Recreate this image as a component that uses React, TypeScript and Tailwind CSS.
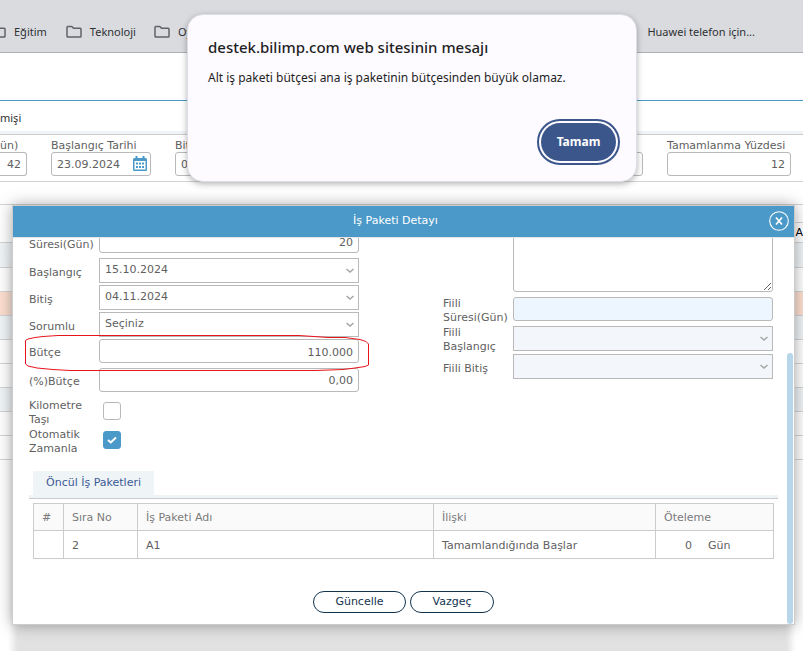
import React, { useState } from 'react';

const fieldClass = 'block w-full h-6 rounded-[3px] border border-[#b9b9b9] px-[5px] text-[11px] text-[#5f5f5f] outline-none';

function FolderIcon() {
    return (
        <svg className="shrink-0" width="16" height="14" viewBox="0 0 16 14" fill="none" stroke="#5f6368" strokeWidth="1.5" aria-hidden="true">
            <path d="M1 2.2V11.2Q1 12 1.8 12H14.2Q15 12 15 11.2V4Q15 3.2 14.2 3.2H7.6L5.8 1.4H1.8Q1 1.4 1 2.2Z" />
        </svg>
    );
}

function CalendarIcon() {
    return (
        <svg width="14" height="16" viewBox="0 0 14 16" aria-hidden="true">
            <path d="M2.500 0h2v2h5V0h2v2h1A1.500 1.500 0 0 1 14 3.500v10a1.500 1.500 0 0 1-1.500 1.500h-11A1.500 1.500 0 0 1 0 13.500v-10A1.500 1.500 0 0 1 1.500 2h1z" fill="#4b99c8" />
            <path d="M1.500 5h11v8.500h-11z" fill="#fff" />
            <path d="M3 6.500h2v2H3zM6 6.500h2v2H6zM9 6.500h2v2H9zM3 10h2v2H3zM6 10h2v2H6zM9 10h2v2H9z" fill="#4b99c8" />
        </svg>
    );
}

interface SelectFieldProps {
    id: string;
    value?: string;
    disabled?: boolean;
}

function SelectField({ id, value = '', disabled = false }: SelectFieldProps) {
    return (
        <div className="relative">
            <select
                id={id}
                disabled={disabled}
                defaultValue={value}
                className="block h-[25px] w-full appearance-none border border-[#b9b9b9] bg-white px-[5px] text-[11px] text-[#5f5f5f] opacity-100 outline-none disabled:bg-[#f3f7fb]"
            >
                <option value={value}>{value}</option>
            </select>
            <svg className="pointer-events-none absolute top-[10px] right-1" width="10" height="6" viewBox="0 0 10 6" fill="none" stroke="#a5a5a5" strokeWidth="1.500" aria-hidden="true">
                <path d="M1.500 1L5 4L8.500 1" />
            </svg>
        </div>
    );
}

interface FormRowProps {
    id: string;
    label: string;
    className?: string;
    children: React.ReactNode;
}

function FormRow({ id, label, className = '', children }: FormRowProps) {
    return (
        <div className={`flex items-center ${className}`}>
            <label htmlFor={id} className="w-[70px] shrink-0 pt-1 text-[11px] leading-[14px]">{label}</label>
            <div className="min-w-0 flex-1">{children}</div>
        </div>
    );
}

function BookmarksBar() {
    return (
        <nav className="flex h-[53px] items-center border-b border-[#b0b1b6] bg-[#dadbdf] pt-3 pr-12 font-['Noto_Sans','Open_Sans',sans-serif] text-[11px] text-[#303134]">
            <a href="#egitim" className="-ml-[10px] flex items-center gap-2"><FolderIcon />Eğitim</a>
            <a href="#teknoloji" className="ml-[19px] flex items-center gap-2"><FolderIcon />Teknoloji</a>
            <a href="#oyun" className="ml-[18px] flex items-center gap-2"><FolderIcon />Oyun</a>
            <a href="#huawei" className="ml-auto">Huawei telefon için...</a>
        </nav>
    );
}

function SummaryBar() {
    return (
        <div className="flex h-[47px] gap-6 border-b border-[#d3d3d3] pt-[5px] pr-3 text-[11px]">
            <div className="w-[27px]">
                <label htmlFor="sure" className="block leading-[12px]">ün)</label>
                <input id="sure" defaultValue="42" className={`${fieldClass} rounded-l-none border-l-0 text-right`} />
            </div>
            <div className="w-[100px]">
                <label htmlFor="bas" className="block leading-[12px] whitespace-nowrap">Başlangıç Tarihi</label>
                <div className="relative">
                    <input id="bas" defaultValue="23.09.2024" className={fieldClass} />
                    <button type="button" aria-label="Takvim" className="absolute top-[4px] right-1"><CalendarIcon /></button>
                </div>
            </div>
            <div className="w-[100px]">
                <label htmlFor="bit" className="block leading-[12px]">Bitiş Tarihi</label>
                <input id="bit" defaultValue="04.11.2024" className={fieldClass} />
            </div>
            <div className="flex-1 pt-3">
                <input aria-label="Durum" className={fieldClass} />
            </div>
            <div className="w-[124px]">
                <label htmlFor="yuzde" className="block leading-[12px] whitespace-nowrap">Tamamlanma Yüzdesi</label>
                <input id="yuzde" defaultValue="12" className={`${fieldClass} text-right`} />
            </div>
        </div>
    );
}

function TaskGrid() {
    return (
        <div className="mt-[22px] border-t border-[#d3d3d3] text-[11px] text-black">
            <div className="ml-auto h-[18px] w-2 border-b border-[#d3d3d3]" />
            <div className="flex h-5 items-center justify-end border-b border-[#d3d3d3] pt-[2px]">A</div>
            <div className="h-[25px] border-b border-[#d3d3d3] bg-[#eff4f7]" />
            <div className="h-6 border-b border-[#d3d3d3]" />
            <div className="h-6 border-b border-[#d3d3d3] bg-[#fddfd0]" />
            <div className="h-6 border-b border-[#d3d3d3] bg-[#eff4f7]" />
            <div className="h-6 border-b border-[#d3d3d3]" />
            <div className="h-6 border-b border-[#d3d3d3]" />
            <div className="h-6 border-b border-[#d3d3d3] bg-[#eff4f7]" />
            <div className="h-6 border-b border-[#d3d3d3]" />
            <div className="h-6 border-b border-[#d3d3d3]" />
        </div>
    );
}

function DetailDialog() {
    const [milestone, setMilestone] = useState(false);
    const [auto, setAuto] = useState(true);

    return (
        <section role="dialog" aria-labelledby="dialog-title" className="absolute top-[205px] right-2 left-3 border border-[#cccccc] bg-white shadow-[0_0_14px_rgba(0,0,0,0.35)]">
            <header className="relative flex h-[31px] items-center justify-center bg-[#4b99c8] pr-4 text-white">
                <h2 id="dialog-title" className="text-[11px] font-medium">İş Paketi Detayı</h2>
                <button type="button" aria-label="Kapat" className="absolute top-[5px] right-[5px]">
                    <svg width="20" height="20" viewBox="0 0 20 20" fill="none" stroke="#fff" aria-hidden="true">
                        <circle cx="10" cy="10" r="9.300" strokeWidth="1.100" />
                        <path d="M7 6.500L13 13.500M13 6.500L7 13.500" strokeWidth="1.700" />
                    </svg>
                </button>
            </header>

            <div className="relative overflow-hidden border-t border-[#e4e4e4]">
                <div className="-mt-[9px] grid grid-cols-2 gap-[84px] pr-[21px] pl-4">
                    <div className="relative">
                        <div className="mb-[5px] flex items-center">
                            <label htmlFor="duration" className="w-[70px] shrink-0 pt-2 text-[11px] leading-[14px]">Süresi(Gün)</label>
                            <input id="duration" defaultValue="20" className={`${fieldClass} min-w-0 flex-1 pt-[2px] text-right`} />
                        </div>
                        <FormRow id="start" label="Başlangıç" className="mb-[2px]">
                            <SelectField id="start" value="15.10.2024" />
                        </FormRow>
                        <FormRow id="end" label="Bitiş" className="mb-[2px]">
                            <SelectField id="end" value="04.11.2024" />
                        </FormRow>
                        <FormRow id="owner" label="Sorumlu" className="mb-[2px]">
                            <SelectField id="owner" value="Seçiniz" />
                        </FormRow>
                        <FormRow id="budget" label="Bütçe" className="mb-[5px]">
                            <input id="budget" defaultValue="110.000" className={`${fieldClass} pt-[2px] text-right`} />
                        </FormRow>
                        <FormRow id="budget-rate" label="(%)Bütçe" className="mb-[5px]">
                            <input id="budget-rate" defaultValue="0,00" className={`${fieldClass} text-right`} />
                        </FormRow>
                        <FormRow id="milestone" label="Kilometre Taşı" className="h-7">
                            <input
                                id="milestone"
                                type="checkbox"
                                checked={milestone}
                                onChange={e => setMilestone(e.target.checked)}
                                className="ml-1 block h-[18px] w-[18px] appearance-none rounded-[3px] border border-[#b9b9b9] bg-white"
                            />
                        </FormRow>
                        <FormRow id="auto" label="Otomatik Zamanla" className="h-[29px]">
                            <div className="relative ml-1 h-[18px] w-[18px]">
                                <input
                                    id="auto"
                                    type="checkbox"
                                    checked={auto}
                                    onChange={e => setAuto(e.target.checked)}
                                    className="block h-[18px] w-[18px] appearance-none rounded-[3px] border border-[#b9b9b9] bg-white checked:border-[#4b99c8] checked:bg-[#4b99c8]"
                                />
                                {auto && (
                                    <svg className="pointer-events-none absolute inset-0" width="18" height="18" viewBox="0 0 18 18" fill="none" stroke="#fff" strokeWidth="2" aria-hidden="true">
                                        <path d="M5 9L7.800 11.500L13 6.500" />
                                    </svg>
                                )}
                            </div>
                        </FormRow>

                        {/* hand-drawn mark around the budget row */}
                        <svg className="pointer-events-none absolute top-[106px] -left-1" width="346" height="38" viewBox="0 0 346 38" fill="none" stroke="#e8141c" aria-hidden="true">
                            <path d="M0.500 5.500L3 4L10 2.500L18 1.500L33 0.500H274L289 1.500L303 2.500L320 2.500L335 4.500L341 6.500L343.500 9V30L340 31.500L330 33L318 34.500L290 35.500H45L28 34.500L12 33L3 31L0.500 29Z" />
                        </svg>
                    </div>

                    <div>
                        <div className="mb-1 flex">
                            <label htmlFor="note" className="w-[70px] shrink-0 text-[11px] leading-[8px]">Açıklama</label>
                            <textarea id="note" className="block h-[63px] min-w-0 flex-1 resize-y rounded-[3px] border border-[#b9b9b9] outline-none" />
                        </div>
                        <FormRow id="real-duration" label="Fiili Süresi(Gün)" className="mb-[3px] h-[26px]">
                            <input id="real-duration" disabled className={`${fieldClass} bg-[#edf5fe]`} />
                        </FormRow>
                        <FormRow id="real-start" label="Fiili Başlangıç" className="mb-[3px] h-[26px]">
                            <SelectField id="real-start" disabled />
                        </FormRow>
                        <FormRow id="real-end" label="Fiili Bitiş">
                            <SelectField id="real-end" disabled />
                        </FormRow>
                    </div>
                </div>

                <div className="mt-[17px] mr-4 ml-4 border-b border-[#cccccc]">
                    <div className="border-b-[3px] border-[#eff4f7] pl-1">
                        <button type="button" className="block h-6 bg-[#eff4f7] px-[13px] pt-px text-[11px] text-[#3d5a96]">Öncül İş Paketleri</button>
                    </div>
                </div>

                <div className="mt-1 mr-5 ml-5">
                    <table className="w-full table-fixed border-collapse text-left text-[11px]">
                        <colgroup>
                            <col className="w-[30px]" />
                            <col className="w-[74px]" />
                            <col className="w-[40%]" />
                            <col className="w-[30%]" />
                            <col />
                        </colgroup>
                        <thead>
                            <tr className="h-[27px] bg-[#fafafa] text-[#7b7b7b]">
                                <th className="border border-[#cccccc] px-2 pt-[3px] font-normal">#</th>
                                <th className="border border-[#cccccc] px-2 pt-[3px] font-normal">Sıra No</th>
                                <th className="border border-[#cccccc] px-2 pt-[3px] font-normal">İş Paketi Adı</th>
                                <th className="border border-[#cccccc] px-2 pt-[3px] font-normal">İlişki</th>
                                <th className="border border-[#cccccc] px-2 pt-[3px] font-normal">Öteleme</th>
                            </tr>
                        </thead>
                        <tbody>
                            <tr className="h-7">
                                <td className="border border-[#cccccc] px-2 pt-[3px]" />
                                <td className="border border-[#cccccc] px-2 pt-[3px]">2</td>
                                <td className="border border-[#cccccc] px-2 pt-[3px]">A1</td>
                                <td className="border border-[#cccccc] px-2 pt-[3px]">Tamamlandığında Başlar</td>
                                <td className="border border-[#cccccc] px-2 pt-[3px]">
                                    <span className="inline-block w-7 text-right">0</span>
                                    <span className="ml-4">Gün</span>
                                </td>
                            </tr>
                        </tbody>
                    </table>
                </div>

                <div className="mt-8 mb-[11px] flex justify-center gap-1 text-[11px] text-[#12344f]">
                    <button type="button" className="h-[22px] w-[93px] rounded-full border border-[#12344f] bg-white">Güncelle</button>
                    <button type="button" className="h-[22px] w-[84px] rounded-full border border-[#12344f] bg-white">Vazgeç</button>
                </div>

                <div className="absolute right-px bottom-0 h-[271px] w-[6px] rounded-full bg-[#b8d6ea]" />
            </div>
        </section>
    );
}

function AlertBox() {
    return (
        <div role="alertdialog" aria-labelledby="alert-title" className="absolute top-[14px] right-[166px] left-[187px] rounded-[16px] border border-[#dcdde6] bg-[#fdfbff] px-5 pt-[22px] pb-5 font-['Noto_Sans','Open_Sans',sans-serif] text-[#1f1f1f] shadow-[0_2px_6px_rgba(0,0,0,0.3)]">
            <h1 id="alert-title" className="text-[15px] leading-5 font-medium">destek.bilimp.com web sitesinin mesajı</h1>
            <p className="mt-[10px] text-[12px] leading-[22px]">Alt iş paketi bütçesi ana iş paketinin bütçesinden büyük olamaz.</p>
            <div className="mt-[34px] flex justify-end">
                <button type="button" className="h-[38px] w-[75px] rounded-full bg-[#3b568b] text-[12px] font-bold text-white outline-2 outline-offset-2 outline-[#3b568b]">Tamam</button>
            </div>
        </div>
    );
}

export default function App() {
    return (
        <div className="relative min-h-screen overflow-hidden bg-white font-['DejaVu_Sans',Verdana,sans-serif] text-[#5f5f5f]">
            <BookmarksBar />
            <div className="h-[48px] border-b border-[#4b99c8]" />
            <div className="flex h-[33px] items-center border-b-[3px] border-[#eff4f7] pt-1 font-['Noto_Sans','Open_Sans',sans-serif] text-[11px] text-[#303030]">mişi</div>
            <div className="border-t border-[#cccccc]">
                <SummaryBar />
            </div>
            <TaskGrid />
            <div className="absolute top-[260px] right-3 -bottom-5 left-[13px] bg-[#e1e1e1] blur-[3px]" />
            <DetailDialog />
            <AlertBox />
        </div>
    );
}
